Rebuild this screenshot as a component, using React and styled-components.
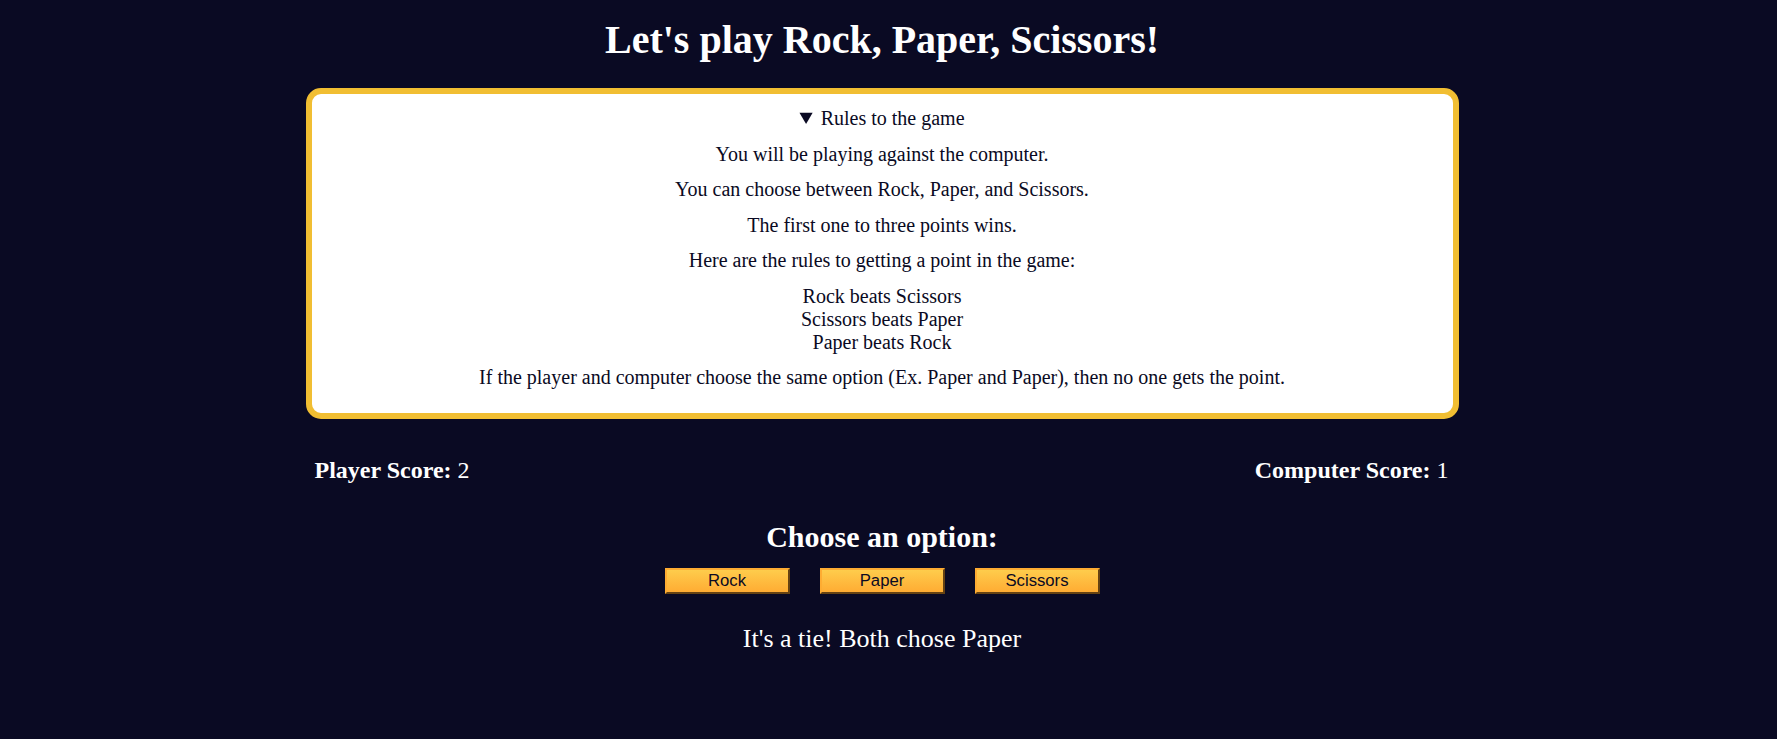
import { useState } from "react";
import styled, { createGlobalStyle } from "styled-components";

const GlobalStyle = createGlobalStyle`
  html, body {
    margin: 0;
    padding: 0;
    background-color: #0a0a23;
  }
  body {
    min-height: 100vh;
    font-family: "Liberation Serif", "Times New Roman", serif;
    color: #ffffff;
    text-align: center;
  }
`;

const options = ["Rock", "Paper", "Scissors"];

function App() {
  const [playerScore] = useState(2);
  const [computerScore] = useState(1);
  const [result] = useState("It's a tie! Both chose Paper");

  return (
    <Main>
      <GlobalStyle />
      <Title>Let's play Rock, Paper, Scissors!</Title>

      <RulesBox open>
        <RulesSummary>Rules to the game</RulesSummary>
        <RuleText>You will be playing against the computer.</RuleText>
        <RuleText>You can choose between Rock, Paper, and Scissors.</RuleText>
        <RuleText>The first one to three points wins.</RuleText>
        <RuleText>Here are the rules to getting a point in the game:</RuleText>
        <RuleList>
          <li>Rock beats Scissors</li>
          <li>Scissors beats Paper</li>
          <li>Paper beats Rock</li>
        </RuleList>
        <RuleText>
          If the player and computer choose the same option (Ex. Paper and
          Paper), then no one gets the point.
        </RuleText>
      </RulesBox>

      <ScoreRow>
        <Score>
          <strong>Player Score:</strong> {playerScore}
        </Score>
        <Score>
          <strong>Computer Score:</strong> {computerScore}
        </Score>
      </ScoreRow>

      <ChooseTitle>Choose an option:</ChooseTitle>
      <ButtonRow>
        {options.map((option) => (
          <OptionButton key={option} type="button">
            {option}
          </OptionButton>
        ))}
      </ButtonRow>

      <Result>{result}</Result>
    </Main>
  );
}

export default App;

const Main = styled.main`
  width: calc(100% - 13px);
  padding-top: 16px;
`;

const Title = styled.h1`
  font-size: 40px;
  font-weight: 700;
  margin: 0 0 25px;
`;

const RulesBox = styled.details`
  box-sizing: border-box;
  width: 1153px;
  margin: 0 auto;
  padding: 13px 0 11px;
  background-color: #ffffff;
  color: #0a0a23;
  border: 6px solid #f1be32;
  border-radius: 15px;
  font-size: 20px;
`;

const RulesSummary = styled.summary`
  cursor: pointer;
`;

const RuleText = styled.p`
  margin: 12.5px 0;
`;

const RuleList = styled.ul`
  list-style: none;
  margin: 12.5px 0;
  padding: 0;
`;

const ScoreRow = styled.div`
  box-sizing: border-box;
  width: 1153px;
  margin: 38px auto 0;
  padding: 0 10px 0 9px;
  display: flex;
  justify-content: space-between;
  font-size: 24px;
`;

const Score = styled.p`
  margin: 0;
`;

const ChooseTitle = styled.h2`
  font-size: 30px;
  font-weight: 700;
  margin: 36px 0 14px;
`;

const ButtonRow = styled.div`
  display: flex;
  justify-content: center;
  gap: 30px;
`;

const OptionButton = styled.button`
  box-sizing: border-box;
  width: 125px;
  height: 26px;
  padding: 0 6px;
  cursor: pointer;
  font-family: "Liberation Sans", Arial, sans-serif;
  font-size: 16.7px;
  color: #0a0a23;
  background-color: #feac32;
  background-image: linear-gradient(#fecc4c, #ffac33);
  border: 2px outset #feac32;
  border-right-color: #b97a22;
  border-bottom-color: #b97a22;
`;

const Result = styled.p`
  font-size: 26px;
  margin: 30px 0 0;
`;
